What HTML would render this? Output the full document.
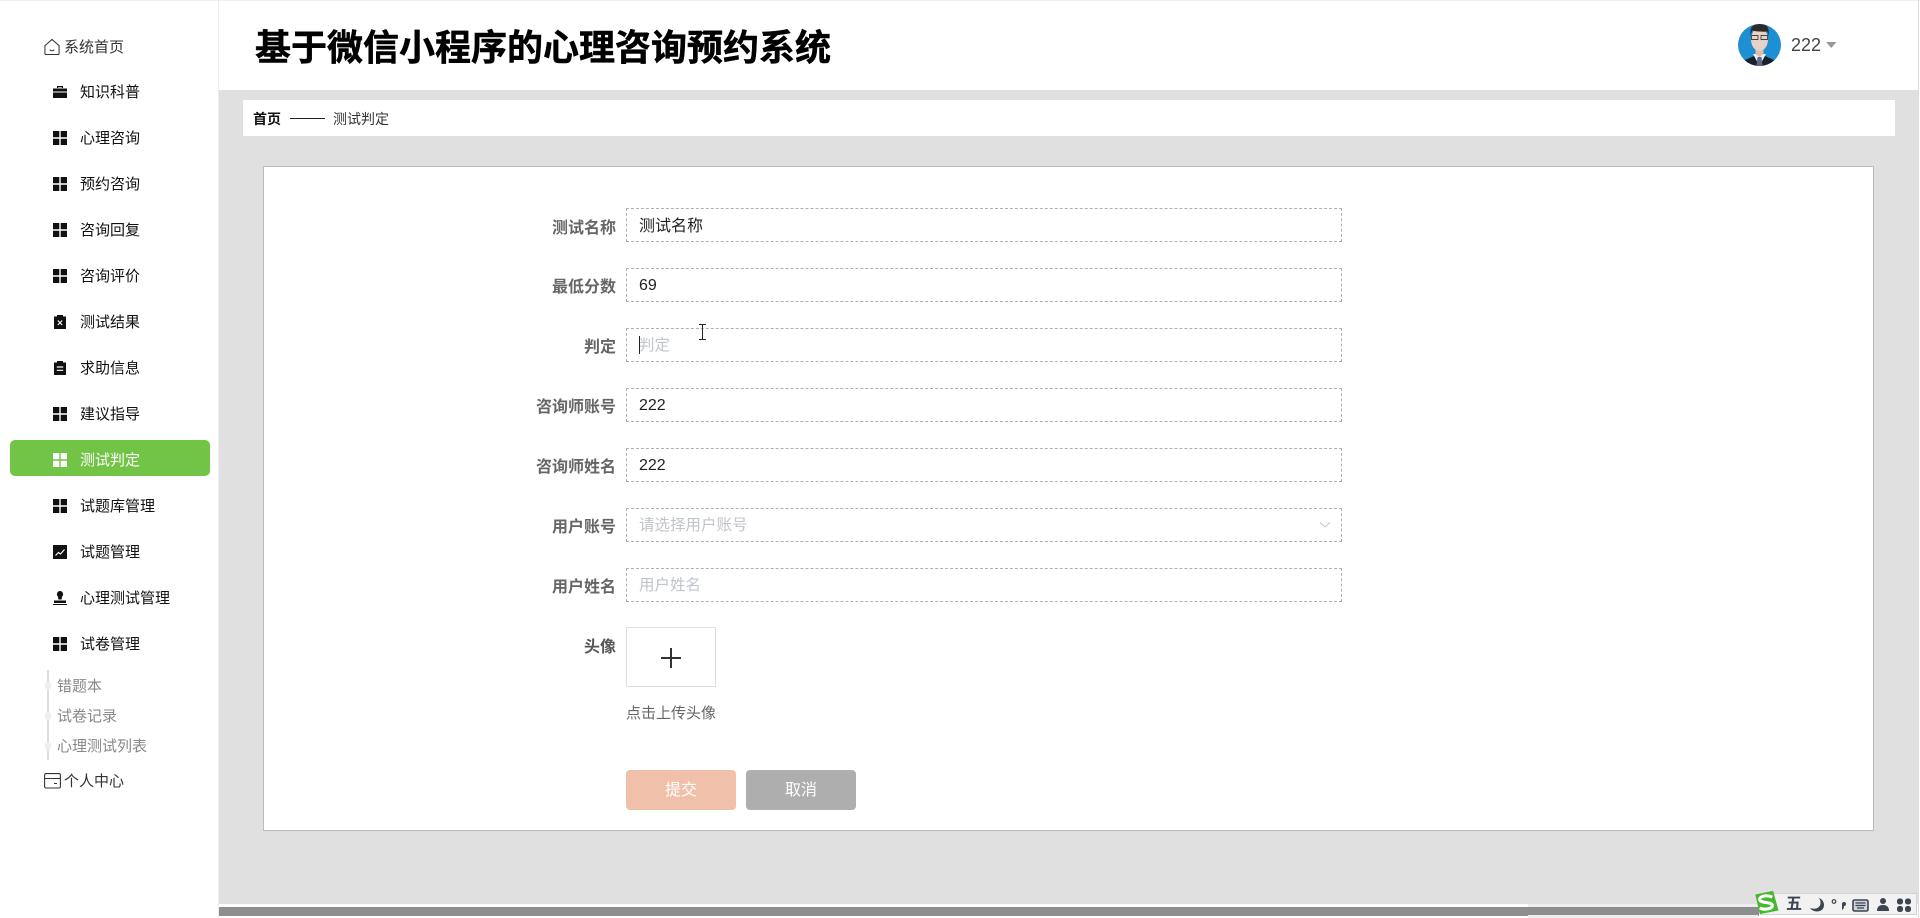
<!DOCTYPE html>
<html lang="zh">
<head>
<meta charset="utf-8">
<title>基于微信小程序的心理咨询预约系统</title>
<style>
html,body{margin:0;padding:0;width:1920px;height:918px;overflow:hidden;background:#fff;font-family:"Liberation Sans","Noto Sans CJK SC",sans-serif;}
.a{position:absolute;white-space:nowrap;}
.t{line-height:20px;height:20px;}
.nav{font-size:15px;color:#111;left:80px;}
.ic{position:absolute;left:53px;width:14px;height:14px;}
.sub{font-size:15px;color:#888;left:57px;}
.lab{font-size:16px;font-weight:700;color:#666;width:180px;left:436px;text-align:right;line-height:34px;height:34px;}
.inp{position:absolute;left:626px;width:714px;height:32px;border:1px dashed #b0b0b0;font-size:16px;color:#222;line-height:35px;text-indent:12px;overflow:hidden;}
.num{line-height:33px;}
.ph{color:#c0c4cc;font-size:15.5px;line-height:34px;}
.btn{position:absolute;top:770px;height:40px;width:110px;border-radius:4px;color:#fff;font-size:16px;line-height:42px;text-align:center;}
</style>
</head>
<body>
<div class="a" style="left:0;top:0;width:1920px;height:1px;background:#eee"></div>
<div class="a" style="left:219px;top:90px;width:1699px;height:814px;background:#e0e0e0"></div>
<div class="a" style="left:218px;top:0;width:1px;height:918px;background:#eee"></div>
<div class="a" style="left:1918px;top:0;width:1px;height:918px;background:#ddd"></div>

<!-- header -->
<div class="a" style="left:255px;top:22px;font-size:36px;font-weight:700;line-height:52px;color:#000;-webkit-text-stroke:0.5px #000">基于微信小程序的心理咨询预约系统</div>
<svg class="a" style="left:1738px;top:24px" width="43" height="42" viewBox="0 0 43 42">
<defs><clipPath id="c"><ellipse cx="21.5" cy="21" rx="21.5" ry="21"/></clipPath></defs>
<g clip-path="url(#c)">
<rect width="43" height="42" fill="#1e8fd2"/>
<path d="M4 42 L7 36 L16 32 H27 L36 36 L39 42Z" fill="#1c2028"/>
<path d="M15 30 L21.500 42 L28 30Z" fill="#eef0f2"/>
<path d="M19.500 33 h4 l1 9 h-6z" fill="#5a6a88"/>
<path d="M17.500 24 h8 v6 l-4 3 l-4 -3z" fill="#dcbcae"/>
<ellipse cx="21.500" cy="15.500" rx="8.500" ry="11.500" fill="#e8d2c8"/>
<path d="M12.500 12 C11.500 3 15 0 22 0 C29 0 31.500 3 30.500 12 L29.500 7.500 C25 8 18 7.500 14 6.500Z" fill="#2e2a28"/>
<path d="M13.500 11.500h6.500v4h-6.500Z M23 11.500h6.500v4H23Z" fill="none" stroke="#444" stroke-width=".9"/>
</g>
</svg>
<div class="a" style="left:1791px;top:34px;font-size:18px;line-height:22px;color:#444">222</div>
<svg class="a" style="left:1826px;top:41px" width="11" height="8"><path d="M0 1H10.500L5.300 7Z" fill="#999"/></svg>

<!-- breadcrumb -->
<div class="a" style="left:243px;top:100px;width:1652px;height:36px;background:#fff"></div>
<div class="a t" style="left:253px;top:109px;font-size:14px;font-weight:700;color:#111">首页</div>
<div class="a" style="left:290px;top:118px;width:35px;height:1px;background:#222"></div>
<div class="a t" style="left:333px;top:109px;font-size:14px;color:#333">测试判定</div>

<!-- sidebar -->
<div class="a" style="left:10px;top:440px;width:200px;height:36px;background:#72c447;border-radius:5px"></div>

<svg class="a" style="left:44px;top:38px" width="16" height="18" viewBox="0 0 17 18" fill="none" stroke="#333" stroke-width="1.100"><path d="M1 7.500 L8.500 1 L16 7.500 V16 a1 1 0 0 1 -1 1 H2 a1 1 0 0 1 -1 -1Z"/><path d="M6 12 q2.500 2 5 0"/></svg>
<div class="a t" style="left:64px;top:38px;font-size:15px;color:#333">系统首页</div>

<svg class="ic" style="top:85px" viewBox="0 0 14 14"><path d="M4 3V1h6v2h-1.200V2.200H5.200V3Z M0 3.500h14v3H0Z M0 7.500h14V13H0Z" fill="#111"/></svg>
<div class="a t nav" style="top:83px">知识科普</div>

<svg class="ic" style="top:131px" viewBox="0 0 14 14"><path d="M0 0h6.300v6.300H0Z M7.700 0H14v6.300H7.700Z M0 7.700h6.300V14H0Z M7.700 7.700H14V14H7.700Z" fill="#111"/></svg>
<div class="a t nav" style="top:129px">心理咨询</div>

<svg class="ic" style="top:177px" viewBox="0 0 14 14"><path d="M0 0h6.300v6.300H0Z M7.700 0H14v6.300H7.700Z M0 7.700h6.300V14H0Z M7.700 7.700H14V14H7.700Z" fill="#111"/></svg>
<div class="a t nav" style="top:175px">预约咨询</div>

<svg class="ic" style="top:223px" viewBox="0 0 14 14"><path d="M0 0h6.300v6.300H0Z M7.700 0H14v6.300H7.700Z M0 7.700h6.300V14H0Z M7.700 7.700H14V14H7.700Z" fill="#111"/></svg>
<div class="a t nav" style="top:221px">咨询回复</div>

<svg class="ic" style="top:269px" viewBox="0 0 14 14"><path d="M0 0h6.300v6.300H0Z M7.700 0H14v6.300H7.700Z M0 7.700h6.300V14H0Z M7.700 7.700H14V14H7.700Z" fill="#111"/></svg>
<div class="a t nav" style="top:267px">咨询评价</div>

<svg class="ic" style="top:315px" viewBox="0 0 14 14"><path d="M1 1.500h3V0h6v1.500h3V14H1Z" fill="#111"/><path d="M4.800 5.500 L9.200 10 M9.200 5.500 L4.800 10" stroke="#fff" stroke-width="1.100"/></svg>
<div class="a t nav" style="top:313px">测试结果</div>

<svg class="ic" style="top:361px" viewBox="0 0 14 14"><path d="M1 1.500h3V0h6v1.500h3V14H1Z" fill="#111"/><path d="M3.800 6h6.400 M3.800 9.300h6.400" stroke="#fff" stroke-width="1.200"/></svg>
<div class="a t nav" style="top:359px">求助信息</div>

<svg class="ic" style="top:407px" viewBox="0 0 14 14"><path d="M0 0h6.300v6.300H0Z M7.700 0H14v6.300H7.700Z M0 7.700h6.300V14H0Z M7.700 7.700H14V14H7.700Z" fill="#111"/></svg>
<div class="a t nav" style="top:405px">建议指导</div>

<svg class="ic" style="top:453px" viewBox="0 0 14 14"><path d="M0 0h6.300v6.300H0Z M7.700 0H14v6.300H7.700Z M0 7.700h6.300V14H0Z M7.700 7.700H14V14H7.700Z" fill="#fff"/></svg>
<div class="a t nav" style="top:451px;color:#fff">测试判定</div>

<svg class="ic" style="top:499px" viewBox="0 0 14 14"><path d="M0 0h6.300v6.300H0Z M7.700 0H14v6.300H7.700Z M0 7.700h6.300V14H0Z M7.700 7.700H14V14H7.700Z" fill="#111"/></svg>
<div class="a t nav" style="top:497px">试题库管理</div>

<svg class="ic" style="top:545px" viewBox="0 0 14 14"><rect width="14" height="14" fill="#111"/><path d="M2.500 10.500 L5.500 7.500 L7.500 9 L11.500 4.500" stroke="#fff" stroke-width="1.100" fill="none"/></svg>
<div class="a t nav" style="top:543px">试题管理</div>

<svg class="ic" style="top:591px" viewBox="0 0 14 14"><path d="M7 0a3.200 3.200 0 0 1 2 5.600L8.600 8.500H5.400L5 5.600A3.200 3.200 0 0 1 7 0Z M1 9.500h12V12H1Z M0 13h14v1H0Z" fill="#111"/></svg>
<div class="a t nav" style="top:589px">心理测试管理</div>

<svg class="ic" style="top:637px" viewBox="0 0 14 14"><path d="M0 0h6.300v6.300H0Z M7.700 0H14v6.300H7.700Z M0 7.700h6.300V14H0Z M7.700 7.700H14V14H7.700Z" fill="#111"/></svg>
<div class="a t nav" style="top:635px">试卷管理</div>

<div class="a" style="left:47px;top:670px;width:2px;height:90px;background:#ddd"></div>
<div class="a" style="left:45px;top:682px;width:6px;height:8px;border-radius:4px;background:#eee"></div>
<div class="a" style="left:45px;top:712px;width:6px;height:8px;border-radius:4px;background:#eee"></div>
<div class="a" style="left:45px;top:742px;width:6px;height:8px;border-radius:4px;background:#eee"></div>
<div class="a t sub" style="top:677px">错题本</div>
<div class="a t sub" style="top:707px">试卷记录</div>
<div class="a t sub" style="top:737px">心理测试列表</div>

<svg class="a" style="left:44px;top:773px" width="17" height="16" viewBox="0 0 17 16" fill="none" stroke="#333" stroke-width="1.100"><rect x="0.600" y="0.600" width="15.800" height="14.400" rx="1.500"/><path d="M0.600 5.500H16.400 M10 10.500h3"/></svg>
<div class="a t" style="left:64px;top:772px;font-size:15px;color:#333">个人中心</div>

<!-- card -->
<div class="a" style="left:263px;top:166px;width:1609px;height:663px;background:#fff;border:1px solid #bbb"></div>

<div class="a lab" style="top:212px">测试名称</div>
<div class="inp" style="top:208px">测试名称</div>
<div class="a lab" style="top:271px">最低分数</div>
<div class="inp num" style="top:268px">69</div>
<div class="a lab" style="top:331px">判定</div>
<div class="inp ph" style="top:328px">判定</div>
<div class="a" style="left:639px;top:336px;width:1px;height:18px;background:#222"></div>
<div class="a lab" style="top:391px">咨询师账号</div>
<div class="inp num" style="top:388px">222</div>
<div class="a lab" style="top:451px">咨询师姓名</div>
<div class="inp num" style="top:448px">222</div>
<div class="a lab" style="top:511px">用户账号</div>
<div class="inp ph" style="top:508px">请选择用户账号</div>
<svg class="a" style="left:1319px;top:521px" width="12" height="8" fill="none" stroke="#c0c4cc"><path d="M1 1.500 L6 6 L11 1.500"/></svg>
<div class="a lab" style="top:571px">用户姓名</div>
<div class="inp ph" style="top:568px">用户姓名</div>

<div class="a lab" style="top:631px;color:#555">头像</div>
<div class="a" style="left:626px;top:627px;width:88px;height:58px;border:1px solid #ddd"></div>
<div class="a" style="left:661px;top:657px;width:20px;height:2px;background:#333"></div>
<div class="a" style="left:670px;top:648px;width:2px;height:20px;background:#333"></div>
<div class="a t" style="left:626px;top:704px;font-size:15px;color:#666">点击上传头像</div>

<div class="btn" style="left:626px;background:#f0c0aa">提交</div>
<div class="btn" style="left:746px;background:#aeaeae">取消</div>

<!-- mouse I-beam cursor -->
<svg class="a" style="left:698px;top:324px" width="9" height="16" fill="none" stroke="#222"><path d="M1 .5h7 M4.500 .5v15 M1 15.500h7"/></svg>

<!-- bottom scrollbar -->
<div class="a" style="left:219px;top:907px;width:1540px;height:9px;background:#8e8e8e"></div>
<div class="a" style="left:1528px;top:904px;width:230px;height:3px;background:#eee"></div>
<div class="a" style="left:1528px;top:915px;width:230px;height:3px;background:#eee"></div>

<!-- IME bar -->
<div class="a" style="left:1760px;top:893px;width:157px;height:22px;background:#f2f2f2;border:1px solid #d0d4da;box-sizing:border-box"></div>
<svg class="a" style="left:1752px;top:890px" width="28" height="25" viewBox="0 0 30 28"><path d="M3 5 L23 1 L29 23 L8 27Z" fill="#46b82e"/><path d="M22 8 C16 5 7 7 8 11 C9 15 21 13 22 17 C23 21 13 23 8 20" fill="none" stroke="#fff" stroke-width="3.500"/></svg>
<div class="a" style="left:1786px;top:895px;font-size:16px;font-weight:700;line-height:20px;color:#3d4450">五</div>
<svg class="a" style="left:1809px;top:897px" width="108" height="16" viewBox="0 0 108 16">
<path d="M10 1 C14 7 10 14 1 11 C4 16 15 16 15 8 C15 5 13 2 10 1Z" fill="#3d4450"/>
<circle cx="25" cy="4.500" r="1.800" fill="none" stroke="#3d4450" stroke-width="1.200"/>
<path d="M33 7 a2 2 0 1 1 2 2 q0 3 -2 4" fill="#3d4450"/>
<rect x="44" y="3" width="15" height="11" rx="1.500" fill="#cfd2d6" stroke="#3d4450" stroke-width="1.600"/>
<path d="M46.500 6h10 M46.500 8.500h10 M48 11h7" stroke="#3d4450" stroke-width="1.300"/>
<circle cx="74" cy="4" r="3" fill="#3d4450"/>
<path d="M68 14 q0-6 6-6 t6 6Z" fill="#3d4450"/>
<rect x="88" y="1.500" width="6" height="6" rx="2.500" fill="#3d4450"/>
<rect x="96" y="1.500" width="6" height="6" rx="2.500" fill="#3d4450"/>
<rect x="88" y="9" width="6" height="6" rx="2.500" fill="#3d4450"/>
<rect x="96" y="9" width="6" height="6" rx="2.500" fill="#3d4450"/>
</svg>
</body>
</html>
